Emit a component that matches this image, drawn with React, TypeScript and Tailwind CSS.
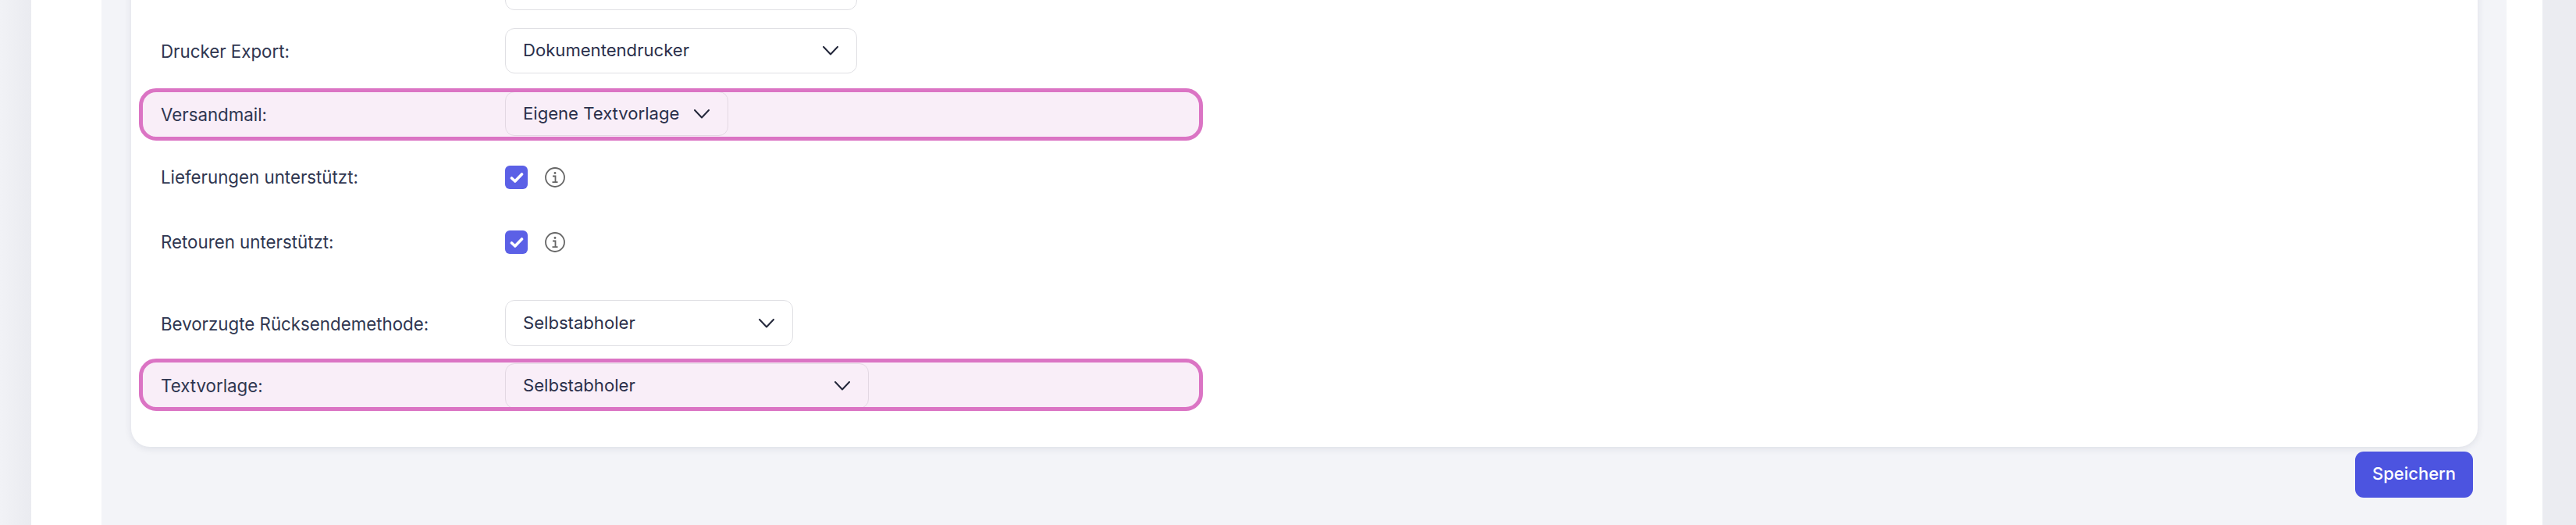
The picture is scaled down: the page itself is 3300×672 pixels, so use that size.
import React from 'react';

function Chevron() {
  return (
    <svg width="20" height="12" viewBox="0 0 20 12" fill="none" className="shrink-0">
      <path d="M1 1L10 10.5L19 1" stroke="#23273a" strokeWidth="2" strokeLinecap="round" strokeLinejoin="round" />
    </svg>
  );
}

function InfoIcon() {
  return (
    <svg width="26" height="26" viewBox="0 0 26 26" fill="none" className="shrink-0">
      <circle cx="13" cy="13" r="12" stroke="#666666" strokeWidth="1.8" />
      <circle cx="13" cy="7.5" r="1.4" fill="#666666" />
      <path d="M10 11.5H13.5V19M9.5 19.2H16.5" stroke="#666666" strokeWidth="1.8" />
    </svg>
  );
}

function Checkbox() {
  return (
    <div className="w-[29px] h-[30px] rounded-[6px] bg-[#5b60e6] flex items-center justify-center">
      <svg width="18" height="15" viewBox="0 0 18 15" fill="none">
        <path d="M2.5 8L6.8 12L15.5 3" stroke="white" strokeWidth="3.6" strokeLinecap="round" strokeLinejoin="round" />
      </svg>
    </div>
  );
}

function Select({ text, width, height = 'h-[58px]', className = '' }: { text: string; width: string; height?: string; className?: string }) {
  return (
    <div className={`${width} ${height} ${className} shrink-0 flex items-center justify-between pl-[22px] pr-[23px] border-[1.5px] border-[#e0e0e4] rounded-[12px] text-[22.1px] text-[#2a2f4a]`}>
      <span className="-mt-[2px]">{text}</span>
      <Chevron />
    </div>
  );
}

function Row({ label, labelClass = '', className = '', children }: { label: string; labelClass?: string; className?: string; children: React.ReactNode }) {
  return (
    <div className={`flex items-center pl-[38px] ${className}`}>
      <div className={`w-[441px] h-[30px] shrink-0 text-[22.3px] text-[#2f3650] ${labelClass}`}>{label}</div>
      <div className="flex items-center">{children}</div>
    </div>
  );
}

function HighlightRow({ label, labelClass = '', className = '', children }: { label: string; labelClass?: string; className?: string; children: React.ReactNode }) {
  return (
    <div className={`ml-[10px] w-[1363px] h-[67px] flex border-[5px] border-[#db74c4] bg-[#f9eef8] rounded-[22px] overflow-hidden pl-[23px] ${className}`}>
      <div className={`w-[441px] h-[30px] shrink-0 self-center text-[22.3px] text-[#2f3650] ${labelClass}`}>{label}</div>
      {children}
    </div>
  );
}

export default function App() {
  return (
    <div className="h-[672px] w-[3300px] flex overflow-hidden bg-white text-[22px] leading-[30px] font-['Inter',sans-serif]">
      <div className="w-[40px] shrink-0 bg-gradient-to-r from-[#f1f2f6] to-[#eaebf0]" />
      <div className="w-[90px] shrink-0 bg-white" />

      <main className="flex-1 bg-[#f3f4f8] pl-[38px] pr-[37px]">
        <div className="-mt-[45px] bg-white rounded-b-[24px] shadow-[0_2px_10px_rgba(30,35,70,0.10)] pb-[46px]">
          <div className="pl-[479px]">
            <Select text="" width="w-[451px]" />
          </div>

          <Row label="Drucker Export:" labelClass="mt-[2px]" className="mt-[23px]">
            <Select text="Dokumentendrucker" width="w-[451px]" />
          </Row>

          <HighlightRow label="Versandmail:" className="mt-[19px]">
            <Select text="Eigene Textvorlage" width="w-[286px]" height="h-[57px]" className="-mt-[1px] border-[#e3d8e3]" />
          </HighlightRow>

          <Row label="Lieferungen unterstützt:" className="mt-[32px]">
            <Checkbox />
            <div className="ml-[22px]"><InfoIcon /></div>
          </Row>

          <Row label="Retouren unterstützt:" className="mt-[53px]">
            <Checkbox />
            <div className="ml-[22px]"><InfoIcon /></div>
          </Row>

          <Row label="Bevorzugte Rücksendemethode:" labelClass="mt-[2px]" className="mt-[59px]">
            <Select text="Selbstabholer" width="w-[369px]" height="h-[59px]" />
          </Row>

          <HighlightRow label="Textvorlage:" labelClass="mt-[2px]" className="mt-[16px]">
            <Select text="Selbstabholer" width="w-[466px]" className="mt-[1px] border-[#e3d8e3]" />
          </HighlightRow>
        </div>

        <div className="flex justify-end mt-[6px] pr-[6px]">
          <button className="w-[151px] h-[59px] pb-[3px] rounded-[11px] bg-[#4c54e0] text-white font-medium">Speichern</button>
        </div>
      </main>

      <div className="w-[46px] shrink-0 bg-white" />
      <div className="w-[43px] shrink-0 bg-[#ebecf1]" />
    </div>
  );
}
